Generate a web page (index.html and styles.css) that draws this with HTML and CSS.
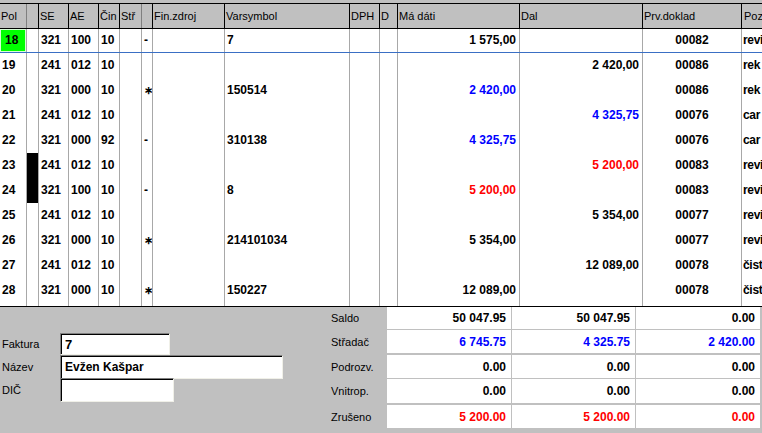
FILE: index.html
```html
<!DOCTYPE html>
<html>
<head>
<meta charset="utf-8">
<link rel="stylesheet" href="styles.css">
</head>
<body>
<div class="grid">
  <div class="row head">
    <div class="c g">Pol</div><div class="c">&nbsp;</div><div class="c">SE</div><div class="c">AE</div><div class="c">Čin</div><div class="c g">Stř</div><div class="c">&nbsp;</div><div class="c">Fin.zdroj</div><div class="c">Varsymbol</div><div class="c">DPH</div><div class="c">D</div><div class="c">Má dáti</div><div class="c">Dal</div><div class="c">Prv.doklad</div><div class="c last">Poz</div>
  </div>
  <div class="row sel">
    <div class="c focus">18</div><div class="c"></div><div class="c">321</div><div class="c">100</div><div class="c">10</div><div class="c"></div><div class="c sym">-</div><div class="c"></div><div class="c">7</div><div class="c"></div><div class="c"></div><div class="c r">1 575,00</div><div class="c r"></div><div class="c ctr">00082</div><div class="c last">revi</div>
  </div>
  <div class="row">
    <div class="c">19</div><div class="c"></div><div class="c">241</div><div class="c">012</div><div class="c">10</div><div class="c"></div><div class="c sym"></div><div class="c"></div><div class="c"></div><div class="c"></div><div class="c"></div><div class="c r"></div><div class="c r">2 420,00</div><div class="c ctr">00086</div><div class="c last">rek</div>
  </div>
  <div class="row">
    <div class="c">20</div><div class="c"></div><div class="c">321</div><div class="c">000</div><div class="c">10</div><div class="c"></div><div class="c sym star">∗</div><div class="c"></div><div class="c">150514</div><div class="c"></div><div class="c"></div><div class="c r blue">2 420,00</div><div class="c r"></div><div class="c ctr">00086</div><div class="c last">rek</div>
  </div>
  <div class="row">
    <div class="c">21</div><div class="c"></div><div class="c">241</div><div class="c">012</div><div class="c">10</div><div class="c"></div><div class="c sym"></div><div class="c"></div><div class="c"></div><div class="c"></div><div class="c"></div><div class="c r"></div><div class="c r blue">4 325,75</div><div class="c ctr">00076</div><div class="c last">car</div>
  </div>
  <div class="row">
    <div class="c">22</div><div class="c"></div><div class="c">321</div><div class="c">000</div><div class="c">92</div><div class="c"></div><div class="c sym">-</div><div class="c"></div><div class="c">310138</div><div class="c"></div><div class="c"></div><div class="c r blue">4 325,75</div><div class="c r"></div><div class="c ctr">00076</div><div class="c last">car</div>
  </div>
  <div class="row">
    <div class="c">23</div><div class="c mark"></div><div class="c">241</div><div class="c">012</div><div class="c">10</div><div class="c"></div><div class="c sym"></div><div class="c"></div><div class="c"></div><div class="c"></div><div class="c"></div><div class="c r"></div><div class="c r red">5 200,00</div><div class="c ctr">00083</div><div class="c last">revi</div>
  </div>
  <div class="row">
    <div class="c">24</div><div class="c mark"></div><div class="c">321</div><div class="c">100</div><div class="c">10</div><div class="c"></div><div class="c sym">-</div><div class="c"></div><div class="c">8</div><div class="c"></div><div class="c"></div><div class="c r red">5 200,00</div><div class="c r"></div><div class="c ctr">00083</div><div class="c last">revi</div>
  </div>
  <div class="row">
    <div class="c">25</div><div class="c"></div><div class="c">241</div><div class="c">012</div><div class="c">10</div><div class="c"></div><div class="c sym"></div><div class="c"></div><div class="c"></div><div class="c"></div><div class="c"></div><div class="c r"></div><div class="c r">5 354,00</div><div class="c ctr">00077</div><div class="c last">revi</div>
  </div>
  <div class="row">
    <div class="c">26</div><div class="c"></div><div class="c">321</div><div class="c">000</div><div class="c">10</div><div class="c"></div><div class="c sym star">∗</div><div class="c"></div><div class="c">214101034</div><div class="c"></div><div class="c"></div><div class="c r">5 354,00</div><div class="c r"></div><div class="c ctr">00077</div><div class="c last">revi</div>
  </div>
  <div class="row">
    <div class="c">27</div><div class="c"></div><div class="c">241</div><div class="c">012</div><div class="c">10</div><div class="c"></div><div class="c sym"></div><div class="c"></div><div class="c"></div><div class="c"></div><div class="c"></div><div class="c r"></div><div class="c r">12 089,00</div><div class="c ctr">00078</div><div class="c last">čist</div>
  </div>
  <div class="row">
    <div class="c">28</div><div class="c"></div><div class="c">321</div><div class="c">000</div><div class="c">10</div><div class="c"></div><div class="c sym star">∗</div><div class="c"></div><div class="c">150227</div><div class="c"></div><div class="c"></div><div class="c r">12 089,00</div><div class="c r"></div><div class="c ctr">00078</div><div class="c last">čist</div>
  </div>
  <div class="row fill">
    <div class="c"></div><div class="c"></div><div class="c"></div><div class="c"></div><div class="c"></div><div class="c"></div><div class="c"></div><div class="c"></div><div class="c"></div><div class="c"></div><div class="c"></div><div class="c"></div><div class="c"></div><div class="c"></div><div class="c last"></div>
  </div>
</div>

<div class="bottom">
  <div class="form">
    <div class="frow r1"><span class="lbl">Faktura</span><div class="inp w-fak">7</div></div>
    <div class="frow r2"><span class="lbl">Název</span><div class="inp w-naz">Evžen Kašpar</div></div>
    <div class="frow r3"><span class="lbl">DIČ</span><div class="inp w-dic"></div></div>
  </div>
  <div class="sum">
    <div class="srow h22"><span class="slbl">Saldo</span><span class="v">50 047.95</span><span class="v">50 047.95</span><span class="v">0.00</span></div>
    <div class="srow h23 g1"><span class="slbl">Střadač</span><span class="v blue">6 745.75</span><span class="v blue">4 325.75</span><span class="v blue">2 420.00</span></div>
    <div class="srow h23 g2"><span class="slbl">Podrozv.</span><span class="v">0.00</span><span class="v">0.00</span><span class="v">0.00</span></div>
    <div class="srow h24 g1"><span class="slbl">Vnitrop.</span><span class="v">0.00</span><span class="v">0.00</span><span class="v">0.00</span></div>
    <div class="srow h23 g2"><span class="slbl">Zrušeno</span><span class="v red">5 200.00</span><span class="v red">5 200.00</span><span class="v red">0.00</span></div>
  </div>
</div>
</body>
</html>
```

FILE: styles.css
```css
* { box-sizing: border-box; }
html, body {
  margin: 0;
  padding: 0;
}
body {
  width: 762px;
  height: 433px;
  overflow: hidden;
  background: #c0c0c0;
  font-family: "Liberation Sans", Arial, sans-serif;
  color: #000;
}

.grid {
  margin-top: 3px;
  height: 304px;
  display: flex;
  flex-direction: column;
  background: #fff;
  border-top: 1px solid #000;
  border-bottom: 1px solid #000;
}

.row {
  display: grid;
  grid-template-columns: 27px 12px 30px 30px 21px 22px 11px 72px 125px 30px 18px 122px 123px 99px 1fr;
  height: 25px;
  font-size: 12px;
  font-weight: bold;
  line-height: 25px;
  flex: none;
}

.c {
  border-right: 1px solid #a8a8a8;
  padding: 0 2px;
  overflow: hidden;
  white-space: nowrap;
}
.c.last {
  border-right: none;
  padding: 0 0 0 1px;
  letter-spacing: -0.3px;
}

.head {
  height: 25px;
  background: #c0c0c0;
  border-bottom: 1px solid #000;
  font-size: 11px;
  font-weight: normal;
  line-height: 24px;
}
.head .c {
  border-right: 1px solid #000;
  padding: 0 1px;
}
.head .c.g { border-right-color: #808080; }
.head .c.last { border-right: none; padding-left: 2px; letter-spacing: 0; }

.sel {
  height: 24px;
  line-height: 23px;
  border-bottom: 1px solid #3a6fc4;
}

.fill {
  flex: 1;
  height: auto;
}

.focus {
  background: #00ff00;
  box-shadow: inset 0 0 0 1px #d8ffd8;
  padding-left: 5px;
}
.mark { background: #000; }

.sym { padding: 0 2px; color: #000; }
.star { font-size: 11px; }

.r { text-align: right; padding-right: 3px; }
.ctr { text-align: center; }
.blue { color: #0000ff; }
.red { color: #ff0000; }

/* bottom panel */
.bottom {
  display: flex;
  height: 126px;
}

.form {
  width: 329px;
  padding-top: 26px;
}
.frow {
  display: flex;
  align-items: center;
}
.lbl {
  width: 60px;
  padding-left: 2px;
  font-size: 11px;
}
.inp {
  background: #fff;
  border-top: 1px solid #808080;
  border-left: 1px solid #808080;
  border-right: 1px solid #f0f0e8;
  border-bottom: 1px solid #f0f0e8;
  box-shadow: inset 1px 1px 0 #000;
  font-size: 12px;
  font-weight: bold;
  padding-left: 4px;
  display: flex;
  align-items: center;
}
.r1 .inp { height: 22px; }
.r2 .inp { height: 24px; }
.r3 { margin-top: -1px; }
.r3 .inp { height: 24px; }
.w-fak { width: 110px; font-size: 13px; }
.w-naz { width: 223px; }
.w-dic { width: 114px; }

.sum {
  display: flex;
  flex-direction: column;
}
.srow {
  display: grid;
  grid-template-columns: 57px 124px 123px 124px;
  column-gap: 1px;
}
.srow.h22 { height: 22px; }
.srow.h23 { height: 23px; }
.srow.h24 { height: 24px; }
.srow.g1 { margin-top: 1px; }
.srow.g2 { margin-top: 2px; }

.slbl {
  font-size: 11px;
  padding-left: 2px;
  display: flex;
  align-items: center;
}
.v {
  background: #fff;
  font-size: 12px;
  font-weight: bold;
  text-align: right;
  padding-right: 5px;
  display: flex;
  align-items: center;
  justify-content: flex-end;
}
```
